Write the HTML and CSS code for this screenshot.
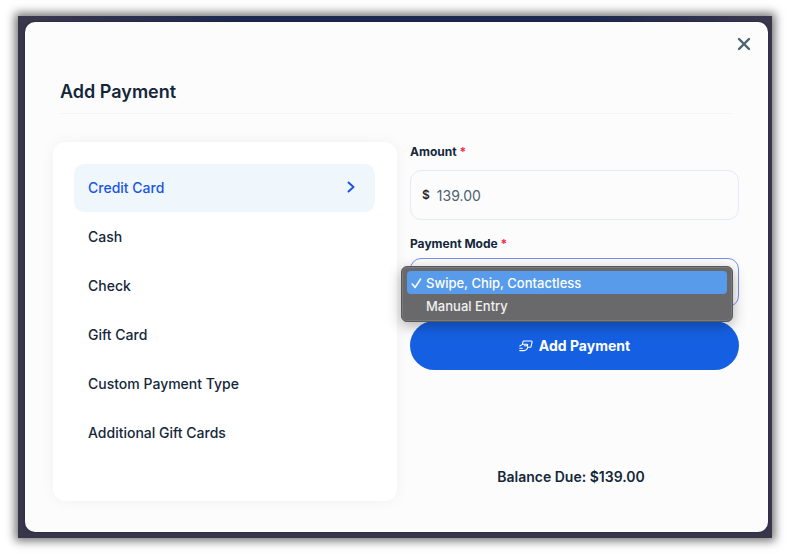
FILE: index.html
```html
<!DOCTYPE html>
<html lang="en">
<head>
  <meta charset="UTF-8" />
  <meta name="viewport" content="width=device-width, initial-scale=1.0" />
  <title>Add Payment</title>
  <link rel="stylesheet" href="styles.css">
</head>
<body>
  <div class="backdrop">
    <main class="modal" role="dialog" aria-labelledby="modal-title">
      <button class="close" type="button" aria-label="Close">
        <svg width="14" height="14" viewBox="0 0 14 14" fill="none" stroke="currentColor" stroke-width="2.4" stroke-linecap="round">
          <path d="M2 2l10 10M12 2L2 12" />
        </svg>
      </button>

      <h1 id="modal-title">Add Payment</h1>

      <div class="content">
        <nav class="methods" aria-label="Payment type">
          <button class="method active" type="button">
            Credit Card
            <svg width="8" height="12" viewBox="0 0 8 12" fill="none" stroke="currentColor" stroke-width="2" stroke-linecap="round" stroke-linejoin="round">
              <path d="M1.5 1.5L6.5 6l-5 4.5" />
            </svg>
          </button>
          <button class="method" type="button">Cash</button>
          <button class="method" type="button">Check</button>
          <button class="method" type="button">Gift Card</button>
          <button class="method" type="button">Custom Payment Type</button>
          <button class="method" type="button">Additional Gift Cards</button>
        </nav>

        <form class="details">
          <label for="amount">Amount <span class="required">*</span></label>
          <div class="amount-box">
            <span class="currency">$</span>
            <input id="amount" type="text" value="139.00" />
          </div>

          <label for="mode">Payment Mode <span class="required">*</span></label>
          <div class="mode-box">
            <select id="mode">
              <option selected>Swipe, Chip, Contactless</option>
              <option>Manual Entry</option>
            </select>
            <!-- open menu -->
            <ul class="menu" role="listbox" aria-label="Payment Mode">
              <li class="selected" role="option" aria-selected="true">
                <svg width="11" height="12" viewBox="0 0 11 12" fill="none" stroke="currentColor" stroke-width="1.6" stroke-linecap="round" stroke-linejoin="round">
                  <path d="M1.2 7l3 3.4L9.6 2" />
                </svg>
                Swipe, Chip, Contactless
              </li>
              <li role="option" aria-selected="false">Manual Entry</li>
            </ul>
          </div>

          <button class="submit" type="button">
            <svg width="14" height="12" viewBox="0 0 14 12" fill="none" stroke="currentColor" stroke-width="1.1" stroke-linecap="round" stroke-linejoin="round">
              <path d="M3.4 4L4 1.8c.1-.5.4-.8.9-.8h7.4c.6 0 .9.4.8.9l-1 4.6c-.1.5-.4.8-.9.8H9" />
              <path d="M.8 6l2.2-1.4c.4-.3.8-.4 1.3-.4h3.6c1.1 0 1.1 1.6 0 1.6H5.4M8 5.8l.8 1.4c-.5 2-2 3.4-3.8 3.4H.8M.8 8.3h2.6" />
            </svg>
            Add Payment
          </button>

          <p class="balance">Balance Due: $139.00</p>
        </form>
      </div>
    </main>
  </div>
</body>
</html>
```

FILE: styles.css
```css
:root {
  --text: #14273a;
  --slate: #4d6170;
  --blue: #1560e2;
  --link: #1b55e0;
  --border: #e6eaf3;
  --focus: #7890ee;
  --panel: #fff;
  --bg: #fcfcfc;
}

* {
  box-sizing: border-box;
}

body {
  margin: 0;
  padding: 16px 18px;
  min-height: 100vh;
  display: flex;
  background-color: #fff;
  color: var(--text);
  font-family: Inter, "Liberation Sans", sans-serif;
  font-size: 14px;
}

button,
input,
select {
  font: inherit;
  color: inherit;
}

button {
  border: 0;
  cursor: pointer;
}

.backdrop {
  flex: 1;
  display: flex;
  padding: 6px 4px 6px 7px;
  background: linear-gradient(90deg, #3b384c, #1c2850 30%, #1c2850 75%, #3b384c) top / 100% 6px no-repeat, #38364b;
  box-shadow: 0 0 9px 3px rgba(0, 0, 0, 0.55);
}

.modal {
  position: relative;
  flex: 1;
  display: flex;
  flex-direction: column;
  padding: 56px 29px 31px 28px;
  border-radius: 10px;
  background-color: var(--bg);
  box-shadow: 0 0 2px rgba(16, 16, 58, 0.8);
}

.close {
  position: absolute;
  top: 10px;
  right: 12px;
  display: flex;
  padding: 5px;
  background: none;
  color: var(--slate);
}

h1 {
  margin: 0 7px 28px;
  padding-bottom: 8px;
  border-bottom: 1px solid #f4f4f5;
  font-size: 18px;
  font-weight: 600;
  line-height: 27px;
}

.content {
  flex: 1;
  display: grid;
  grid-template-columns: 344fr 329fr;
  gap: 13px;
}

.methods {
  display: flex;
  flex-direction: column;
  gap: 1px;
  padding: 22px 22px 22px 21px;
  border-radius: 12px;
  background-color: var(--panel);
  box-shadow: 0 0 14px rgba(0, 0, 0, 0.05);
}

.method {
  display: flex;
  align-items: center;
  justify-content: space-between;
  height: 48px;
  padding: 0 20px 2px 14px;
  border-radius: 10px;
  background: none;
  font-weight: 500;
  text-align: left;
}

.method.active {
  background-color: #eff7fc;
  color: var(--link);
}

.details {
  display: flex;
  flex-direction: column;
}

label {
  font-size: 12px;
  font-weight: 700;
  line-height: 20px;
}

.required {
  color: #f0284a;
}

.amount-box {
  display: flex;
  align-items: center;
  gap: 7px;
  height: 50px;
  margin: 8px 0 14px;
  padding: 0 11px;
  border: 1px solid var(--border);
  border-radius: 11px;
}

.currency {
  padding-bottom: 2px;
  color: #222;
  font-size: 12px;
  font-weight: 600;
}

.amount-box input {
  flex: 1;
  min-width: 0;
  padding: 0;
  border: 0;
  outline: 0;
  background: none;
  color: var(--slate);
}

.mode-box {
  position: relative;
  margin: 4px 0 14px;
}

.mode-box select {
  display: block;
  width: 100%;
  height: 49px;
  padding: 0 14px;
  border: 1px solid var(--focus);
  border-radius: 11px;
  background-color: var(--bg);
  font-size: 13px;
  appearance: none;
}

.menu {
  position: absolute;
  top: 8px;
  left: -9px;
  right: 6px;
  margin: 0;
  padding: 4px 5px;
  border: 1px solid #58595b;
  border-radius: 6px;
  background-color: #69696c;
  box-shadow: inset 0 0 0 1px #7a7a7c, 0 4px 14px rgba(0, 0, 0, 0.3);
  color: #f0f0f0;
  font-size: 13px;
  list-style: none;
}

.menu li {
  display: flex;
  align-items: center;
  height: 23px;
  padding-left: 19px;
  border-radius: 4px;
  font-weight: 500;
}

.menu .selected {
  gap: 4px;
  padding-left: 4px;
  background-color: #589bea;
  color: #fff;
}

.submit {
  display: flex;
  align-items: center;
  justify-content: center;
  gap: 6px;
  height: 49px;
  border-radius: 25px;
  background-color: var(--blue);
  color: #fff;
  font-weight: 700;
}

.balance {
  margin: 97px 0 0;
  padding-right: 7px;
  font-weight: 600;
  line-height: 20px;
  text-align: center;
}

@media (max-width: 600px) {
  .content {
    grid-template-columns: 1fr;
  }
}
```
